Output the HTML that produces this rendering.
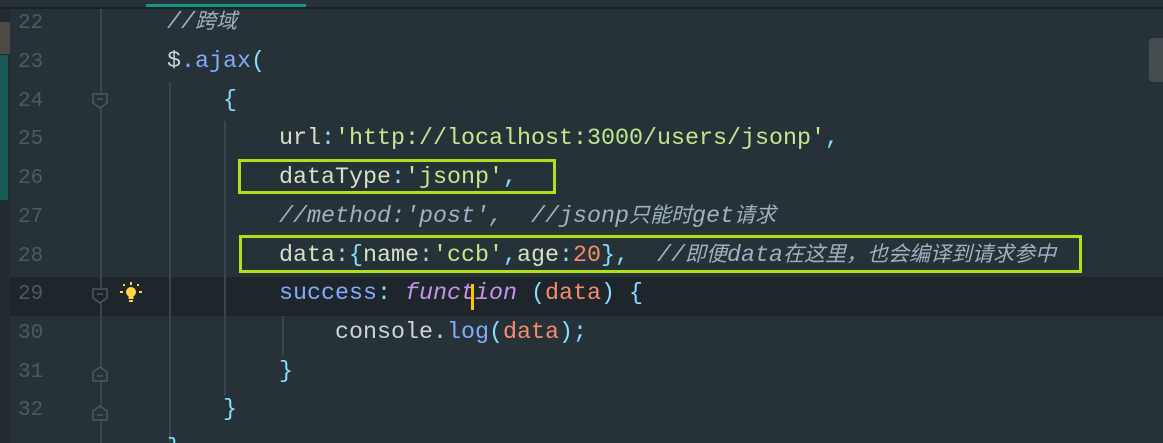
<!DOCTYPE html>
<html style="overflow:hidden;width:1163px;height:443px"><head><meta charset="utf-8"><style>
html,body{overflow:hidden;}
body{margin:0;width:1163px;height:443px;background:#263238;position:relative;font-family:"Liberation Mono","Noto Sans CJK SC",monospace;}
.l{position:absolute;left:0;height:39px;line-height:39px;font-size:23.33px;white-space:pre;color:#d6e0c8;}
.n{position:absolute;left:18px;width:60px;height:39px;line-height:39px;font-size:21px;color:#4a5c63;}
.c{color:#9fb0c2;font-style:italic}
.z{font-size:21px}
.s{color:#c3e88d}.p{color:#89ddff}.b{color:#82aaff}.o{color:#f78c6c}.f{color:#c792ea;font-style:italic}.w{color:#cdd3de}
.g{position:absolute;width:2px;background:#37474f}
.box{position:absolute;border:3px solid #b0e01a;box-sizing:border-box}
.fold{position:absolute;left:92px;width:16px;height:16px}
</style></head><body>
<div style="position:absolute;left:0;top:0;width:1163px;height:8px;background:#263238"></div>
<div style="position:absolute;left:0;top:7px;width:1163px;height:2px;background:#1b2226"></div>
<div style="position:absolute;left:146px;top:4px;width:160px;height:3px;background:#14958a"></div>
<div style="position:absolute;left:0;top:9px;width:10px;height:434px;background:#222b30"></div>
<div style="position:absolute;left:0;top:22px;width:10px;height:32px;background:#4c4a43"></div>
<div style="position:absolute;left:0;top:55px;width:8px;height:145px;background:#145a52"></div>
<div style="position:absolute;left:10px;top:277px;width:1153px;height:39px;background:#1e262b"></div>
<div style="position:absolute;left:1149px;top:38px;width:14px;height:44px;background:#434c4f;border-radius:4px 0 0 4px"></div>
<div class="g" style="left:100px;top:9px;height:434px"></div>
<div class="g" style="left:169px;top:82px;height:360px"></div>
<div class="g" style="left:224px;top:121px;height:275px"></div>
<div class="g" style="left:282px;top:316px;height:39px"></div>
<svg class="fold" style="top:93px" viewBox="0 0 16 16"><path d="M1 1H15V10L8 15L1 10Z" fill="#263238" stroke="#4a5a60" stroke-width="1.5"/><path d="M5 6H11" stroke="#4a5a60" stroke-width="1.5"/></svg>
<svg class="fold" style="top:288px" viewBox="0 0 16 16"><path d="M1 1H15V10L8 15L1 10Z" fill="#1e262b" stroke="#4a5a60" stroke-width="1.5"/><path d="M5 6H11" stroke="#4a5a60" stroke-width="1.5"/></svg>
<svg class="fold" style="top:366px" viewBox="0 0 16 16"><path d="M1 15H15V6L8 1L1 6Z" fill="#263238" stroke="#4a5a60" stroke-width="1.5"/><path d="M5 10H11" stroke="#4a5a60" stroke-width="1.5"/></svg>
<svg class="fold" style="top:405px" viewBox="0 0 16 16"><path d="M1 15H15V6L8 1L1 6Z" fill="#263238" stroke="#4a5a60" stroke-width="1.5"/><path d="M5 10H11" stroke="#4a5a60" stroke-width="1.5"/></svg>
<svg style="position:absolute;left:119px;top:281px" width="24" height="24" viewBox="0 0 24 24"><g fill="#ffd740"><circle cx="12" cy="11" r="5"/><rect x="9.5" y="14" width="5" height="4"/><rect x="10" y="19" width="4" height="2"/><rect x="11" y="1" width="2" height="3"/><rect x="1" y="10" width="3" height="2"/><rect x="20" y="10" width="3" height="2"/><rect x="4" y="3" width="2" height="2"/><rect x="18" y="3" width="2" height="2"/></g></svg>
<div class="n" style="top:4px">22</div><div class="n" style="top:43px">23</div><div class="n" style="top:82px">24</div><div class="n" style="top:120px">25</div><div class="n" style="top:159px">26</div><div class="n" style="top:198px">27</div><div class="n" style="top:237px">28</div><div class="n" style="top:275px">29</div><div class="n" style="top:314px">30</div><div class="n" style="top:353px">31</div><div class="n" style="top:391px">32</div>
<div class="l" style="top:4px;left:167px"><span class="c">//<span class="z">跨域</span></span></div>
<div class="l" style="top:43px;left:167px"><span class="w">$</span><span class="b">.ajax</span><span class="p">(</span></div>
<div class="l" style="top:82px;left:223px"><span class="p">{</span></div>
<div class="l" style="top:120px;left:279px">url<span class="p">:</span><span class="s">'http://localhost:3000/users/jsonp'</span><span class="p">,</span></div>
<div class="l" style="top:159px;left:279px">dataType<span class="p">:</span><span class="s">'jsonp'</span><span class="p">,</span></div>
<div class="l" style="top:198px;left:279px"><span class="c">//method:'post',  //jsonp<span class="z">只能时</span>get<span class="z">请求</span></span></div>
<div class="l" style="top:237px;left:279px">data<span class="p">:{</span>name<span class="p">:</span><span class="s">'ccb'</span><span class="p">,</span>age<span class="p">:</span><span class="o">20</span><span class="p">},</span>  <span class="c">//<span class="z">即便</span>data<span class="z">在这里，也会编译到请求参中</span></span></div>
<div class="l" style="top:275px;left:279px"><span class="b">success</span><span class="p">:</span> <span class="f">function</span> <span class="p">(</span><span class="o">data</span><span class="p">)</span> <span class="p">{</span></div>
<div style="position:absolute;left:471px;top:284px;width:3px;height:26px;background:#ffc400"></div>
<div class="l" style="top:314px;left:335px"><span class="w">console</span><span class="p">.</span><span class="b">log</span><span class="p">(</span><span class="o">data</span><span class="p">);</span></div>
<div class="l" style="top:353px;left:279px"><span class="p">}</span></div>
<div class="l" style="top:391px;left:223px"><span class="p">}</span></div>
<div class="l" style="top:430px;left:167px;height:13px;overflow:hidden"><span class="p">}</span></div>
<div class="box" style="left:238px;top:159px;width:318px;height:35px"></div>
<div class="box" style="left:239px;top:235px;width:843px;height:38px"></div>
</body></html>
